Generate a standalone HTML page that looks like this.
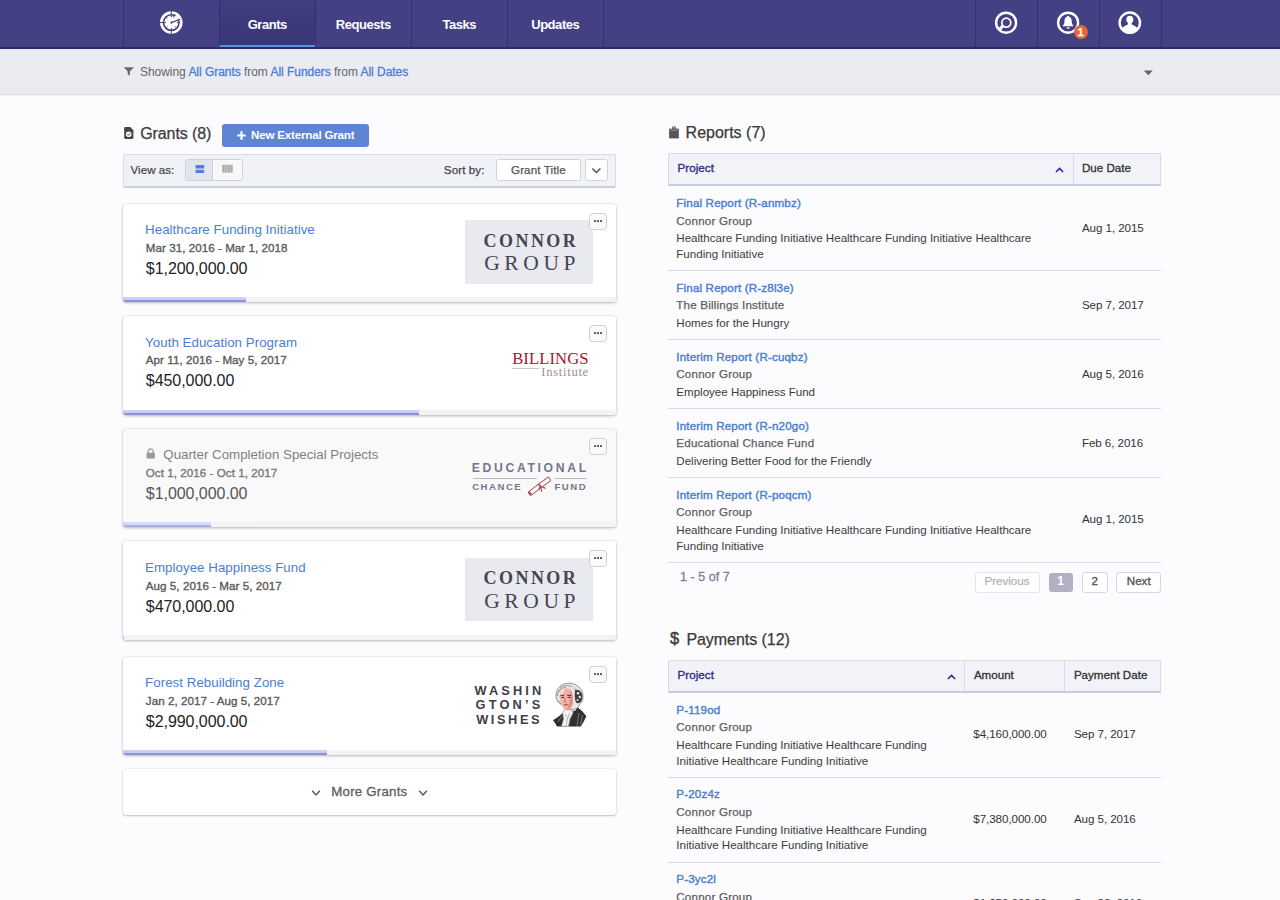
<!DOCTYPE html>
<html lang="en">
<head>
<meta charset="utf-8">
<title>Grants</title>
<style>
*{box-sizing:border-box;margin:0;padding:0}
html,body{width:1280px;height:900px;overflow:hidden}
body{font-family:"Liberation Sans",sans-serif;background:#fcfcfe;color:#333;font-size:11.6px;position:relative}
.t{position:absolute;white-space:nowrap;line-height:1}
.b{position:absolute}
a{color:inherit;text-decoration:none}
#nav{position:absolute;left:0;top:0;width:1280px;height:49px;background:#434084;border-bottom:2px solid #2d2a68}
#nav .cell{position:absolute;top:0;height:47px;border-left:1px solid #312e74}
#nav .cell.active{background:linear-gradient(#403d80,#3a3776);border-bottom:2px solid #5a8ee0}
#nav .end{position:absolute;top:0;height:47px;width:1px;background:#312e74}
#nav svg{position:absolute}
#filter{position:absolute;left:0;top:49px;width:1280px;height:46px;background:#ebebf2;border-bottom:1px solid #dcdce2;box-shadow:0 1px 2px rgba(0,0,0,.05)}
.card{position:absolute;left:123px;width:493px;background:#fff;border-radius:3px;box-shadow:0 1px 3px rgba(0,0,0,.25),0 0 2px rgba(0,0,0,.12);overflow:hidden}
.card.locked{background:#f9f9f9}
.bar{position:absolute;left:0;bottom:0;width:100%;height:5px;background:#f3f3f3}
.bar i{display:block;height:5px;background:linear-gradient(#cdd1fa 0,#c8ccf7 50%,#8b93d7 56%,#8c94d8 100%)}
.dots{position:absolute;z-index:3;width:18px;height:17px;border:1px solid #cfcfcf;border-radius:3.5px;background:#fafafa}
.dots i{position:absolute;top:6px;width:2px;height:2px;background:#555;border-radius:.6px}
.btn{position:absolute;background:#fff;border:1px solid #d2d2d8;border-radius:3px}
.th{position:absolute;width:493px;height:33px;background:#f2f2f9;border:1px solid #d8d8e8;border-bottom:2px solid #cbcbe0;border-radius:2px 2px 0 0}
.sep{position:absolute;width:1px;background:#d8d8e8}
.hr{position:absolute;left:668px;width:493px;height:1px;background:#d8d8e8}
</style>
</head>
<body>
<div id="nav">
<div class="cell" style="left:123px;width:96px"></div>
<div class="cell active" style="left:219px;width:96px"></div>
<div class="cell" style="left:315px;width:96px"></div>
<div class="cell" style="left:411px;width:96px"></div>
<div class="cell" style="left:507px;width:96px"></div>
<div class="end" style="left:603px"></div>
<div class="cell" style="left:975px;width:62px"></div>
<div class="cell" style="left:1037px;width:62px"></div>
<div class="cell" style="left:1099px;width:62px"></div>
<div class="end" style="left:1161px"></div>
<div class="t" style="left:67.275px;width:400px;text-align:center;top:17.6px;font-size:13px;color:#fff;font-weight:bold;letter-spacing:-0.45px">Grants</div>
<div class="t" style="left:163.275px;width:400px;text-align:center;top:17.6px;font-size:13px;color:#fff;font-weight:bold;letter-spacing:-0.45px">Requests</div>
<div class="t" style="left:259.275px;width:400px;text-align:center;top:17.6px;font-size:13px;color:#fff;font-weight:bold;letter-spacing:-0.45px">Tasks</div>
<div class="t" style="left:355.275px;width:400px;text-align:center;top:17.6px;font-size:13px;color:#fff;font-weight:bold;letter-spacing:-0.45px">Updates</div>
<svg style="left:0;top:0" width="1280" height="47" viewBox="0 0 1280 47">
<g transform="translate(171.3,22.6)">
<circle r="9.95" fill="none" stroke="#fff" stroke-width="2.7"/>
<circle r="7" fill="#fff"/>
<path d="M3.6,-8.2 A9,9 0 0 1 8.5,-3 L6.6,-2.3 A7,7 0 0 0 2.8,-6.4Z" fill="#fff"/>
<path d="M0,-12V-7.2M0,12V7.2M-12,0H-7.2" stroke="#434084" stroke-width="1"/>
<path d="M0,-7V-5.4M0,7V5.4M-7,0H-5.4M-5,-5l1.1,1.1M-5,5l1.1,-1.1M5,5l-1.1,-1.1M7,0H5.6M2.7,-6.5l-.5,1.3" stroke="#434084" stroke-width="1"/>
<path d="M0,0 L8.9,-3.4" stroke="#434084" stroke-width="1.15"/>
<path d="M1.6,-7.9 A8,8 0 0 1 4.3,-6.9" stroke="#434084" stroke-width="1.5" fill="none"/>
<circle r="1.05" fill="#434084"/>
</g>
<g transform="translate(1006.1,22.7)">
<circle r="10" fill="none" stroke="#fff" stroke-width="2.4"/>
<circle cx=".2" cy="0" r="4.5" fill="none" stroke="#fff" stroke-width="1.7"/>
<path d="M-3.2,3.2 L-6.6,6.6" stroke="#fff" stroke-width="3.2"/>
</g>
<g transform="translate(1068.1,22.7)">
<circle r="10" fill="none" stroke="#fff" stroke-width="2.4"/>
<path d="M0,-7 C.6,-7 .9,-6.6 .9,-6.1 C2.8,-5.5 3.6,-3.8 3.6,-1.8 C3.6,.6 4.1,1.6 5.2,2.6 L5.2,3.5 L-5.2,3.5 L-5.2,2.6 C-4.1,1.6 -3.6,.6 -3.6,-1.8 C-3.6,-3.8 -2.8,-5.5 -.9,-6.1 C-.9,-6.6 -.6,-7 0,-7Z" fill="#fff"/>
<path d="M-1.5,4.5 H1.5 A1.5,1.5 0 0 1 -1.5,4.5Z" fill="#fff"/>
</g>
<g transform="translate(1129.8,22.7)">
<circle r="10.2" fill="none" stroke="#fff" stroke-width="2.4"/>
<clipPath id="uc"><circle r="10"/></clipPath>
<g clip-path="url(#uc)" fill="#fff">
<ellipse cx="0" cy="-3.2" rx="3.5" ry="3.8"/>
<path d="M-1.9,0 H1.9 V1.8 C3,2.6 6,3.2 7.6,5.2 L9,12 H-9 L-7.6,5.2 C-6,3.2 -3,2.6 -1.9,1.8Z"/>
</g>
</g>
<circle cx="1081" cy="32" r="6.9" fill="#e8672f"/>
<text transform="translate(1080.7,36) rotate(.6) scale(.5)" font-family="Liberation Sans, sans-serif" font-weight="bold" font-size="22.5" stroke="#fff" stroke-width=".5" fill="#fff" text-anchor="middle" text-rendering="geometricPrecision">1</text>
</svg>
</div>
<div id="filter">
<svg class="b" style="left:123px;top:17px" width="12" height="12" viewBox="0 0 12 12"><path d="M.6,1.2H11L6.9,5.6V9.8L4.7,8.3V5.6Z" fill="#6a6a6a"/></svg>
<div class="t" style="left:140px;top:16.5px;font-size:12px;color:#666;letter-spacing:-0.04px">Showing <a style="color:#4a7ed2;-webkit-text-stroke:.3px">All Grants</a> from <a style="color:#4a7ed2;-webkit-text-stroke:.3px">All Funders</a> from <a style="color:#4a7ed2;-webkit-text-stroke:.3px">All Dates</a></div>
<svg class="b" style="left:1143px;top:21px" width="11" height="6" viewBox="0 0 11 6"><path d="M.8,.6H9.8L5.3,5.2Z" fill="#666"/></svg>
</div>
<main>
<section id="grants">
<svg class="b" style="left:124px;top:127px" width="10" height="12" viewBox="0 0 10 12"><path d="M.2,1.2Q.2,.1 1.3,.1H6.3L9.4,3.2V10.8Q9.4,11.9 8.3,11.9H1.3Q.2,11.9 .2,10.8Z" fill="#454545"/><circle cx="4.7" cy="7.2" r="2.8" fill="#fcfcfe"/><path d="M3.4,7.3L4.4,8.3L6.1,6.3" stroke="#454545" stroke-width="1" fill="none"/></svg>
<div class="t" style="left:140.3px;top:125.8px;font-size:16px;color:#3a3a3a;-webkit-text-stroke:0.25px;letter-spacing:-0.12px">Grants (8)</div>
<div class="b" style="left:222px;top:124px;width:147px;height:23px;border-radius:3px;background:#5e85d3"></div>
<svg class="b" style="left:237px;top:131px" width="9" height="9" viewBox="0 0 9 9"><path d="M4.5,.3V8.7M.3,4.5H8.7" stroke="#fff" stroke-width="2.2"/></svg>
<div class="t" style="left:251px;top:128.8px;font-size:11.6px;color:#fff;font-weight:bold;letter-spacing:-0.2px">New External Grant</div>
<div class="b" style="left:123px;top:154px;width:493px;height:34px;background:#f1f1f8;border:1px solid #dadae9;border-bottom:2px solid #cdcde1;border-radius:2px"></div>
<div class="t" style="left:130.6px;top:163.5px;font-size:11.6px;color:#444;-webkit-text-stroke:0.2px">View as:</div>
<div class="btn" style="left:185px;top:159px;width:58px;height:22px;background:#f8f8f8;border-color:#cfcfd4;overflow:hidden"><div style="position:absolute;left:0;top:0;width:27px;height:20px;background:#e2e5ef;border-right:1px solid #cfcfd4"></div></div>
<svg class="b" style="left:195px;top:164px" width="10" height="10" viewBox="0 0 10 10"><path d="M.6,1H9.2V4.4H.6ZM.6,5.7H9.2V9.1H.6Z" fill="#4f80d6"/></svg>
<svg class="b" style="left:222px;top:164px" width="11" height="9" viewBox="0 0 11 9"><path d="M.3,.8H10.7V8.6H.3Z" fill="#a9a9a9"/><path d="M2.9,.8V8.6M5.5,.8V8.6M8.1,.8V8.6" stroke="#d8d8d8" stroke-width=".8"/></svg>
<div class="t" style="left:443.8px;top:164.3px;font-size:11.6px;color:#444;-webkit-text-stroke:0.25px;letter-spacing:0.1px">Sort by:</div>
<div class="btn" style="left:495.5px;top:159px;width:85.5px;height:22px"></div>
<div class="t" style="left:511px;top:164.3px;font-size:11.6px;color:#555;-webkit-text-stroke:0.25px;letter-spacing:0.12px">Grant Title</div>
<div class="btn" style="left:585px;top:159px;width:23px;height:22px"></div>
<svg class="b" style="left:591px;top:167px" width="11" height="8" viewBox="0 0 11 8"><path d="M1.4,1.5L5.4,5.6L9.4,1.5" stroke="#505050" stroke-width="1.4" fill="none"/></svg>
<div class="card" style="top:204px;height:98px"><div class="bar"><i style="width:123px"></i></div></div>
<div class="t" style="left:145.1px;top:223.4px;font-size:13.3px;color:#4a7ed2;letter-spacing:0.04px">Healthcare Funding Initiative</div>
<div class="t" style="left:145.8px;top:242.1px;font-size:11.6px;color:#5a5a5a;-webkit-text-stroke:0.35px;letter-spacing:0.05px">Mar 31, 2016 - Mar 1, 2018</div>
<div class="t" style="left:145.8px;top:260.9px;font-size:16px;color:#222;letter-spacing:-0.05px">$1,200,000.00</div>
<div class="dots" style="left:589px;top:213px"><i style="left:3.8px"></i><i style="left:7.1px"></i><i style="left:10.4px"></i></div>
<div class="b" style="left:465px;top:220px;width:128px;height:64px;background:#e9e9f0"></div>
<div class="t" style="left:330.925px;width:400px;text-align:center;top:231.5px;font-size:18px;color:#454552;font-weight:bold;letter-spacing:2.45px;font-family:'Liberation Serif',serif">CONNOR</div>
<div class="t" style="left:332.2px;width:400px;text-align:center;top:253px;font-size:21.5px;color:#454552;letter-spacing:4.6px;font-family:'Liberation Serif',serif">GROUP</div>
<div class="card" style="top:316px;height:99px"><div class="bar"><i style="width:295.5px"></i></div></div>
<div class="t" style="left:145.1px;top:335.6px;font-size:13.3px;color:#4a7ed2;letter-spacing:0.04px">Youth Education Program</div>
<div class="t" style="left:145.8px;top:354.3px;font-size:11.6px;color:#5a5a5a;-webkit-text-stroke:0.35px;letter-spacing:0.05px">Apr 11, 2016 - May 5, 2017</div>
<div class="t" style="left:145.8px;top:373.1px;font-size:16px;color:#222;letter-spacing:-0.05px">$450,000.00</div>
<div class="dots" style="left:589px;top:325px"><i style="left:3.8px"></i><i style="left:7.1px"></i><i style="left:10.4px"></i></div>
<div class="t" style="left:512.2px;top:350.8px;font-size:16.6px;color:#a3192b;letter-spacing:0.1px;font-family:'Liberation Serif',serif">BILLINGS</div>
<div class="b" style="left:512.4px;top:367.7px;width:27px;height:1px;background:#c4c4c4"></div>
<div class="t" style="right:691.1px;top:366.2px;font-size:12.6px;color:#a88b8f;letter-spacing:0.7px;font-family:'Liberation Serif',serif">Institute</div>
<div class="card locked" style="top:429px;height:98px"><div class="bar" style=opacity:.7><i style="width:88px"></i></div></div>
<svg class="b" style="left:146.4px;top:448.3px" width="10" height="11" viewBox="0 0 10 11"><path d="M2.3,5V3.3a2.4,2.4 0 0 1 4.8,0V5" stroke="#9a9a9a" stroke-width="1.3" fill="none"/><rect x=".5" y="4.8" width="8.4" height="5.8" rx=".8" fill="#9a9a9a"/></svg>
<div class="t" style="left:163.3px;top:448.1px;font-size:13.3px;color:#808080">Quarter Completion Special Projects</div>
<div class="t" style="left:145.8px;top:466.8px;font-size:11.6px;color:#777;-webkit-text-stroke:0.35px;letter-spacing:0.05px">Oct 1, 2016 - Oct 1, 2017</div>
<div class="t" style="left:145.8px;top:485.6px;font-size:16px;color:#555;letter-spacing:-0.05px">$1,000,000.00</div>
<div class="dots" style="left:589px;top:438px"><i style="left:3.8px"></i><i style="left:7.1px"></i><i style="left:10.4px"></i></div>
<div class="t" style="left:471.8px;top:462.3px;font-size:12.2px;color:#757788;font-weight:bold;letter-spacing:2.65px">EDUCATIONAL</div>
<div class="b" style="left:472.5px;top:478px;width:64px;height:1px;background:#b9bbc4"></div>
<div class="b" style="left:554.6px;top:478px;width:32px;height:1px;background:#b9bbc4"></div>
<div class="t" style="left:472.2px;top:482px;font-size:9.6px;color:#757788;font-weight:bold;letter-spacing:1.5px">CHANCE</div>
<div class="t" style="left:554.5px;top:482px;font-size:9.6px;color:#757788;font-weight:bold;letter-spacing:1.5px">FUND</div>
<svg class="b" style="left:525px;top:475px" width="30" height="22" viewBox="0 0 30 22"><g transform="translate(14.5,11.2) rotate(-37)" stroke="#aa555a" fill="none"><rect x="-12.7" y="-2.2" width="25.4" height="4.4" rx=".8" fill="#fbf6f6" stroke-width=".95"/><ellipse cx="-11.9" cy="0" rx="1.3" ry="2.1" fill="#aa555a" stroke="none"/><path d="M.6,-2.6V2.6" stroke-width="1.8"/></g><path d="M15.6,11.2L16.6,16.8M15.6,11.2L20.6,13.4M15.4,10.8L13.6,14.8" stroke="#aa555a" stroke-width="1.2" fill="none"/></svg>
<div class="card" style="top:541px;height:99px"><div class="bar"><i style="width:1px"></i></div></div>
<div class="t" style="left:145.1px;top:561.4px;font-size:13.3px;color:#4a7ed2;letter-spacing:0.04px">Employee Happiness Fund</div>
<div class="t" style="left:145.8px;top:580.1px;font-size:11.6px;color:#5a5a5a;-webkit-text-stroke:0.35px;letter-spacing:0.05px">Aug 5, 2016 - Mar 5, 2017</div>
<div class="t" style="left:145.8px;top:598.9px;font-size:16px;color:#222;letter-spacing:-0.05px">$470,000.00</div>
<div class="dots" style="left:589px;top:550px"><i style="left:3.8px"></i><i style="left:7.1px"></i><i style="left:10.4px"></i></div>
<div class="b" style="left:465px;top:558px;width:128px;height:63px;background:#e9e9f0"></div>
<div class="t" style="left:330.925px;width:400px;text-align:center;top:569.15px;font-size:18px;color:#454552;font-weight:bold;letter-spacing:2.45px;font-family:'Liberation Serif',serif">CONNOR</div>
<div class="t" style="left:332.2px;width:400px;text-align:center;top:590.65px;font-size:21.5px;color:#454552;letter-spacing:4.6px;font-family:'Liberation Serif',serif">GROUP</div>
<div class="card" style="top:657px;height:98px"><div class="bar"><i style="width:204px"></i></div></div>
<div class="t" style="left:145.1px;top:676.4px;font-size:13.3px;color:#4a7ed2;letter-spacing:0.04px">Forest Rebuilding Zone</div>
<div class="t" style="left:145.8px;top:695.1px;font-size:11.6px;color:#5a5a5a;-webkit-text-stroke:0.35px;letter-spacing:0.05px">Jan 2, 2017 - Aug 5, 2017</div>
<div class="t" style="left:145.8px;top:713.9px;font-size:16px;color:#222;letter-spacing:-0.05px">$2,990,000.00</div>
<div class="dots" style="left:589px;top:666px"><i style="left:3.8px"></i><i style="left:7.1px"></i><i style="left:10.4px"></i></div>
<div class="t" style="left:309.45px;width:400px;text-align:center;top:684.8px;font-size:12.8px;color:#3e3e4a;font-weight:bold;letter-spacing:3.1px">WASHIN</div>
<div class="t" style="left:309.5px;width:400px;text-align:center;top:699.4px;font-size:12.8px;color:#3e3e4a;font-weight:bold;letter-spacing:3.2px">GTON’S</div>
<div class="t" style="left:309.2px;width:400px;text-align:center;top:714.3px;font-size:12.8px;color:#3e3e4a;font-weight:bold;letter-spacing:2.6px">WISHES</div>
<svg class="b" style="left:552px;top:682px" width="36" height="46" viewBox="0 0 36 46">
<path d="M1,38.2L8,33.5L12,29.5L23,29L25.6,25.2L30.5,29.5L34.4,34.2L31.5,40L28.8,44.4H5L3,41Z" fill="#2f2f2f"/>
<path d="M6,40L10,34M27,31L25,44M30.5,33L28.5,43" stroke="#8a8a8a" stroke-width=".8" fill="none"/>
<path d="M10.6,30.5L12.5,27.5L20.6,28L21,31L18,37L16.5,44.4H9.5L11.5,37Z" fill="#f4f4f4" stroke="#8c8c8c" stroke-width=".6"/>
<path d="M13,32L15.5,36L14,44M17.5,31L16,36" stroke="#9a9a9a" stroke-width=".7" fill="none"/>
<path d="M4.3,16C3.2,11 5.5,5.5 10,3C14,.6 20,.6 24,3C28.5,5.5 31.5,10 31,15.5C30.8,18.5 29.8,20.5 28,21.5C27.2,24 25.8,26 23.5,27L20,28L9,22C6.2,20.5 4.8,18.5 4.3,16Z" fill="#e6e6e6" stroke="#6a6a6a" stroke-width=".7"/>
<path d="M8,6C11,3.5 16,3 20,4.5M6,10C8,7 11,5.5 14,5.5M5.2,14C5.6,11 7,8.5 9,7M21.5,5.5C23,6.5 23.6,8 23.4,10M6,18.5C6.8,20.5 8,21.6 9.4,22.4" stroke="#777" stroke-width=".7" fill="none"/>
<path d="M23.2,8C25.5,7.2 28.2,8.5 29.6,11C30.8,13.5 30.6,17 29,19.5C27.8,21.2 25.5,21.8 24,20.5C22.6,17 22.4,12 23.2,8Z" fill="#3d3d3d"/>
<circle cx="26" cy="11.2" r="1.3" fill="#e8e8e8"/><circle cx="27.8" cy="15" r="1.2" fill="#e8e8e8"/><circle cx="25.6" cy="18" r="1.1" fill="#dcdcdc"/>
<path d="M7.6,14C7.2,9.5 10,6.2 14,6.2C18.2,6.2 20.8,9 21,13.5C21.2,17.5 21,21.5 19.6,24.5C18.4,27 16,28.4 14,28C11,27.2 8.2,21 7.6,14Z" fill="#f3b3a6"/>
<path d="M17.5,8C20,10 21,13 21,16C21,20 20.6,23 19.6,24.5C18.6,26.6 16.6,28 14.6,28C17,25 18,20 17.5,8Z" fill="#e58f82"/>
<path d="M8.2,10.5C9,8 11,6.8 13,6.6C11.5,9 10.5,12 10,15Z" fill="#fbe3dc"/>
<path d="M8.6,13.6L12.2,13M15,13L19,13.6" stroke="#3a2a28" stroke-width="1" fill="none"/>
<path d="M9.4,15.4H12M15.6,15.4H18.4" stroke="#2b1f1e" stroke-width=".9"/>
<path d="M13.2,15.5L12.6,20L14.6,20.6" stroke="#a85f55" stroke-width=".7" fill="none"/>
<path d="M11.8,23.2C13.2,22.6 15,22.6 16.6,23.2" stroke="#7a3a34" stroke-width=".9" fill="none"/>
</svg>
<div class="card" style="top:769px;height:46px;box-shadow:0 1px 2px rgba(0,0,0,.22),0 0 2px rgba(0,0,0,.12)"></div>
<div class="t" style="left:331.3px;top:784.7px;font-size:13.3px;color:#5e5e5e;-webkit-text-stroke:0.3px;letter-spacing:0.2px">More Grants</div>
<svg class="b" style="left:311px;top:789px" width="10" height="8" viewBox="0 0 10 8"><path d="M1.2,1.8L5,6L8.8,1.8" stroke="#555" stroke-width="1.4" fill="none"/></svg>
<svg class="b" style="left:418px;top:789px" width="10" height="8" viewBox="0 0 10 8"><path d="M1.2,1.8L5,6L8.8,1.8" stroke="#555" stroke-width="1.4" fill="none"/></svg>
</section>
<section id="reports">
<svg class="b" style="left:669px;top:125.5px" width="11" height="13" viewBox="0 0 11 13"><path d="M.1,2.7H9.8V12.4H.1Z" fill="#555"/><path d="M3,2.9V1.5Q3,.2 4.95,.2Q6.9,.2 6.9,1.5V2.9" fill="#555"/><circle cx="4.95" cy="1.7" r=".75" fill="#fcfcfe"/><path d="M1.8,3.8H8.1V4.5H1.8Z" fill="#c8c8c8"/></svg>
<div class="t" style="left:685.6px;top:125.2px;font-size:16px;color:#3a3a3a;-webkit-text-stroke:0.25px">Reports (7)</div>
<div class="th" style="left:668px;top:153px"></div>
<div class="t" style="left:677.5px;top:162.3px;font-size:11.6px;color:#332f82;-webkit-text-stroke:0.35px;letter-spacing:0.05px">Project</div>
<div class="sep" style="left:1072.5px;top:154px;height:30px"></div>
<div class="t" style="left:1082px;top:162.3px;font-size:11.6px;color:#333;-webkit-text-stroke:0.3px">Due Date</div>
<svg class="b" style="left:1055.0px;top:167.0px" width="9" height="6" viewBox="0 0 9 6"><path d="M.9,5.1L4.5,1.4L8.1,5.1" stroke="#31268f" stroke-width="1.5" fill="none"/></svg>
<div class="t" style="left:676.3px;top:196.85px;font-size:11.6px;color:#4a7ed2;-webkit-text-stroke:0.4px;letter-spacing:0.16px">Final Report (R-anmbz)</div>
<div class="t" style="left:676.3px;top:214.5px;font-size:11.6px;color:#5e5e5e;-webkit-text-stroke:0.25px;letter-spacing:0.2px">Connor Group</div>
<div class="t" style="left:676.3px;top:232.2px;font-size:11.6px;color:#3b3b3b;letter-spacing:-0.02px">Healthcare Funding Initiative Healthcare Funding Initiative Healthcare</div>
<div class="t" style="left:676.3px;top:248.05px;font-size:11.6px;color:#3b3b3b;letter-spacing:-0.02px">Funding Initiative</div>
<div class="t" style="left:1081.9px;top:221.75px;font-size:11.6px;color:#333;letter-spacing:-0.06px">Aug 1, 2015</div>
<div class="hr" style="top:270px"></div>
<div class="t" style="left:676.3px;top:281.55px;font-size:11.6px;color:#4a7ed2;-webkit-text-stroke:0.4px;letter-spacing:0.16px">Final Report (R-z8l3e)</div>
<div class="t" style="left:676.3px;top:299.2px;font-size:11.6px;color:#5e5e5e;-webkit-text-stroke:0.25px;letter-spacing:0.2px">The Billings Institute</div>
<div class="t" style="left:676.3px;top:316.9px;font-size:11.6px;color:#3b3b3b;letter-spacing:-0.02px">Homes for the Hungry</div>
<div class="t" style="left:1081.9px;top:298.6px;font-size:11.6px;color:#333;letter-spacing:-0.06px">Sep 7, 2017</div>
<div class="hr" style="top:339px"></div>
<div class="t" style="left:676.3px;top:350.55px;font-size:11.6px;color:#4a7ed2;-webkit-text-stroke:0.4px;letter-spacing:0.16px">Interim Report (R-cuqbz)</div>
<div class="t" style="left:676.3px;top:368.2px;font-size:11.6px;color:#5e5e5e;-webkit-text-stroke:0.25px;letter-spacing:0.2px">Connor Group</div>
<div class="t" style="left:676.3px;top:385.9px;font-size:11.6px;color:#3b3b3b;letter-spacing:-0.02px">Employee Happiness Fund</div>
<div class="t" style="left:1081.9px;top:367.6px;font-size:11.6px;color:#333;letter-spacing:-0.06px">Aug 5, 2016</div>
<div class="hr" style="top:408px"></div>
<div class="t" style="left:676.3px;top:419.55px;font-size:11.6px;color:#4a7ed2;-webkit-text-stroke:0.4px;letter-spacing:0.16px">Interim Report (R-n20go)</div>
<div class="t" style="left:676.3px;top:437.2px;font-size:11.6px;color:#5e5e5e;-webkit-text-stroke:0.25px;letter-spacing:0.2px">Educational Chance Fund</div>
<div class="t" style="left:676.3px;top:454.9px;font-size:11.6px;color:#3b3b3b;letter-spacing:-0.02px">Delivering Better Food for the Friendly</div>
<div class="t" style="left:1081.9px;top:436.6px;font-size:11.6px;color:#333;letter-spacing:-0.06px">Feb 6, 2016</div>
<div class="hr" style="top:477px"></div>
<div class="t" style="left:676.3px;top:488.55px;font-size:11.6px;color:#4a7ed2;-webkit-text-stroke:0.4px;letter-spacing:0.16px">Interim Report (R-poqcm)</div>
<div class="t" style="left:676.3px;top:506.2px;font-size:11.6px;color:#5e5e5e;-webkit-text-stroke:0.25px;letter-spacing:0.2px">Connor Group</div>
<div class="t" style="left:676.3px;top:523.9px;font-size:11.6px;color:#3b3b3b;letter-spacing:-0.02px">Healthcare Funding Initiative Healthcare Funding Initiative Healthcare</div>
<div class="t" style="left:676.3px;top:539.75px;font-size:11.6px;color:#3b3b3b;letter-spacing:-0.02px">Funding Initiative</div>
<div class="t" style="left:1081.9px;top:513.45px;font-size:11.6px;color:#333;letter-spacing:-0.06px">Aug 1, 2015</div>
<div class="hr" style="top:562px"></div>
<div class="t" style="left:680.1px;top:570.5px;font-size:12.4px;color:#7c7c96;-webkit-text-stroke:0.3px;letter-spacing:0.07px">1 - 5 of 7</div>
<div class="btn" style="left:974.5px;top:572px;width:65px;height:20.5px;border-color:#e4e4ee"></div>
<div class="t" style="left:807px;width:400px;text-align:center;top:575px;font-size:11.6px;color:#b0b0b0;-webkit-text-stroke:0.2px">Previous</div>
<div class="b" style="left:1048.5px;top:572.5px;width:24.5px;height:19px;border-radius:3px;background:#b1b1c3"></div>
<div class="t" style="left:860.7px;width:400px;text-align:center;top:575px;font-size:12px;color:#fff;font-weight:bold">1</div>
<div class="btn" style="left:1082px;top:572px;width:25.5px;height:20.5px;border-color:#d6d6e4"></div>
<div class="t" style="left:894.7px;width:400px;text-align:center;top:575px;font-size:11.6px;color:#555;-webkit-text-stroke:0.35px">2</div>
<div class="btn" style="left:1116px;top:572px;width:45px;height:20.5px;border-color:#d6d6e4"></div>
<div class="t" style="left:938.7px;width:400px;text-align:center;top:575px;font-size:11.6px;color:#555;-webkit-text-stroke:0.35px">Next</div>
</section>
<section id="payments">
<div class="t" style="left:670px;top:629.8px;font-size:16.4px;color:#3a3a3a;-webkit-text-stroke:0.45px">$</div>
<div class="t" style="left:686.4px;top:632px;font-size:16px;color:#3a3a3a;-webkit-text-stroke:0.25px;letter-spacing:-0.05px">Payments (12)</div>
<div class="th" style="left:668px;top:660px"></div>
<div class="t" style="left:677.5px;top:669.3px;font-size:11.6px;color:#332f82;-webkit-text-stroke:0.35px;letter-spacing:0.05px">Project</div>
<div class="sep" style="left:964.4px;top:661px;height:30px"></div>
<div class="t" style="left:973.9px;top:669.3px;font-size:11.6px;color:#333;-webkit-text-stroke:0.3px">Amount</div>
<div class="sep" style="left:1064.4px;top:661px;height:30px"></div>
<div class="t" style="left:1073.9px;top:669.3px;font-size:11.6px;color:#333;-webkit-text-stroke:0.3px">Payment Date</div>
<svg class="b" style="left:946.9px;top:674.0px" width="9" height="6" viewBox="0 0 9 6"><path d="M.9,5.1L4.5,1.4L8.1,5.1" stroke="#31268f" stroke-width="1.5" fill="none"/></svg>
<div class="t" style="left:676.3px;top:703.55px;font-size:11.6px;color:#4a7ed2;-webkit-text-stroke:0.4px;letter-spacing:0.16px">P-119od</div>
<div class="t" style="left:676.3px;top:721.2px;font-size:11.6px;color:#5e5e5e;-webkit-text-stroke:0.25px;letter-spacing:0.2px">Connor Group</div>
<div class="t" style="left:676.3px;top:738.9px;font-size:11.6px;color:#3b3b3b;letter-spacing:-0.02px">Healthcare Funding Initiative Healthcare Funding</div>
<div class="t" style="left:676.3px;top:754.75px;font-size:11.6px;color:#3b3b3b;letter-spacing:-0.02px">Initiative Healthcare Funding Initiative</div>
<div class="t" style="left:973.3px;top:728.45px;font-size:11.6px;color:#333;letter-spacing:-0.06px">$4,160,000.00</div>
<div class="t" style="left:1073.9px;top:728.45px;font-size:11.6px;color:#333;letter-spacing:-0.06px">Sep 7, 2017</div>
<div class="hr" style="top:777px"></div>
<div class="t" style="left:676.3px;top:788.25px;font-size:11.6px;color:#4a7ed2;-webkit-text-stroke:0.4px;letter-spacing:0.16px">P-20z4z</div>
<div class="t" style="left:676.3px;top:805.9px;font-size:11.6px;color:#5e5e5e;-webkit-text-stroke:0.25px;letter-spacing:0.2px">Connor Group</div>
<div class="t" style="left:676.3px;top:823.6px;font-size:11.6px;color:#3b3b3b;letter-spacing:-0.02px">Healthcare Funding Initiative Healthcare Funding</div>
<div class="t" style="left:676.3px;top:839.45px;font-size:11.6px;color:#3b3b3b;letter-spacing:-0.02px">Initiative Healthcare Funding Initiative</div>
<div class="t" style="left:973.3px;top:813.15px;font-size:11.6px;color:#333;letter-spacing:-0.06px">$7,380,000.00</div>
<div class="t" style="left:1073.9px;top:813.15px;font-size:11.6px;color:#333;letter-spacing:-0.06px">Aug 5, 2016</div>
<div class="hr" style="top:862px"></div>
<div class="t" style="left:676.3px;top:872.95px;font-size:11.6px;color:#4a7ed2;-webkit-text-stroke:0.4px;letter-spacing:0.16px">P-3yc2l</div>
<div class="t" style="left:676.3px;top:890.6px;font-size:11.6px;color:#5e5e5e;-webkit-text-stroke:0.25px;letter-spacing:0.2px">Connor Group</div>
<div class="t" style="left:676.3px;top:908.3px;font-size:11.6px;color:#3b3b3b;letter-spacing:-0.02px">Healthcare Funding Initiative Healthcare Funding</div>
<div class="t" style="left:676.3px;top:924.15px;font-size:11.6px;color:#3b3b3b;letter-spacing:-0.02px">Initiative Healthcare Funding Initiative</div>
<div class="t" style="left:973.3px;top:896.65px;font-size:11.6px;color:#333;letter-spacing:-0.06px">$1,050,000.00</div>
<div class="t" style="left:1073.9px;top:896.65px;font-size:11.6px;color:#333;letter-spacing:-0.06px">Sep 22, 2016</div>
<div class="hr" style="top:946px"></div>
</section>
</main>
</body>
</html>
